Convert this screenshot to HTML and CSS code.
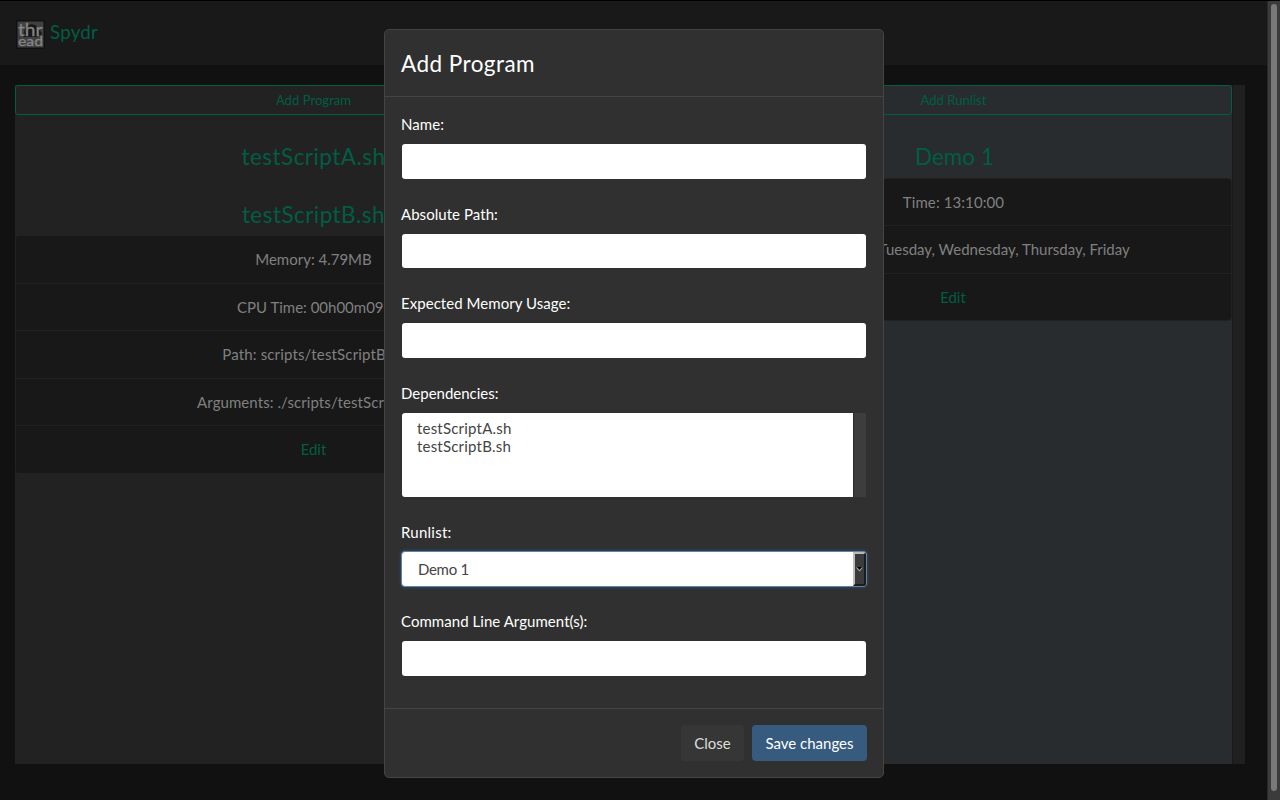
FILE: index.html
```html
<!DOCTYPE html>
<html lang="en">
<head>
<meta charset="utf-8">
<title>Spydr</title>
<link rel="stylesheet" href="styles.css">
</head>
<body>
<div class="page">
  <div class="main">
    <nav class="navbar">
      <svg class="logo" width="29" height="29" viewBox="0 0 29 29">
        <rect width="29" height="29" rx="1" fill="#111"/>
        <rect x="1.5" y="1.5" width="26" height="26" fill="#404040"/>
        <path d="M9 8Q15 1 22 7L26 14L21 17H7Z" fill="#171717"/>
        <text class="logo-text" x="2" y="15.5" font-size="17" textLength="24.5" lengthAdjust="spacingAndGlyphs">thr</text>
        <text class="logo-text" x="2" y="26.3" font-size="14" textLength="25" lengthAdjust="spacingAndGlyphs">ead</text>
      </svg>
      <span class="brand">Spydr</span>
    </nav>
    <div class="columns">
      <section class="programs">
        <button class="add">Add Program</button>
        <h4 class="title">testScriptA.sh</h4>
        <h4 class="title">testScriptB.sh</h4>
        <ul class="list">
          <li>Memory: 4.79MB</li>
          <li>CPU Time: 00h00m09s</li>
          <li class="wide">Path: scripts/testScriptB.sh</li>
          <li class="args">Arguments: ./scripts/testScriptB.sh</li>
          <li><a class="edit">Edit</a></li>
        </ul>
      </section>
      <section class="runlists">
        <button class="add">Add Runlist</button>
        <h4 class="title demo">Demo 1</h4>
        <ul class="list">
          <li class="time">Time: 13:10:00</li>
          <li>Days: Monday, Tuesday, Wednesday, Thursday, Friday</li>
          <li><a class="edit">Edit</a></li>
        </ul>
      </section>
      <div class="inner-scroll"></div>
    </div>
  </div>
  <div class="scrollbar"><div class="thumb"></div></div>
</div>
<div class="modal">
  <div class="modal-header">Add Program</div>
  <div class="modal-body">
    <div class="field"><label>Name:</label><div class="control"></div></div>
    <div class="field"><label>Absolute Path:</label><div class="control"></div></div>
    <div class="field"><label>Expected Memory Usage:</label><div class="control"></div></div>
    <div class="field"><label class="tight">Dependencies:</label>
      <div class="multi">
        <div class="options"><div>testScriptA.sh</div><div>testScriptB.sh</div></div>
        <div class="multi-track"></div>
      </div>
    </div>
    <div class="field"><label class="loose">Runlist:</label>
      <div class="select">
        <span class="value">Demo 1</span>
        <span class="arrow"><svg width="7" height="5" viewBox="0 0 7 5"><path d="M0 .5H7L3.5 4.5Z" fill="#aaa"/><path d="M1 0H6L3.5 3Z" fill="#000"/></svg></span>
      </div>
    </div>
    <div class="field"><label>Command Line Argument(s):</label><div class="control"></div></div>
  </div>
  <div class="modal-footer">
    <button class="btn close">Close</button>
    <button class="btn save">Save changes</button>
  </div>
</div>
</body>
</html>
```
FILE: styles.css
```css
* { box-sizing: border-box; }
body {
  margin: 0;
  height: 800px;
  overflow: hidden;
  background: #111;
  color: #808080;
  font: 15px/22.5px Lato, sans-serif;
}
button { font-family: inherit; }
.page { display: flex; height: 800px; border-top: 1px solid #000; }
.main { flex: 1; }
.navbar {
  display: flex;
  height: 64px;
  padding: 18px 16px 0;
  background: #191919;
}
.logo { margin: 1px 5px 0 0; overflow: visible; }
.logo-text { font-family: Lato, sans-serif; font-weight: 400; fill: #858585; stroke: #858585; stroke-width: .3px; }
.brand { margin-top: -1px; color: #005e44; font-size: 18.75px; line-height: 27px; letter-spacing: .2px; }
.columns { display: flex; height: 679px; margin: 20px 22px 0 15px; }
.programs { width: 597px; background: #222; }
.runlists {
  flex: 1;
  padding-left: 62px;
  background: #282c2f;
}
.inner-scroll { width: 13px; border-left: 1px solid #191919; background: #202020; }
.add {
  display: block;
  width: 100%;
  height: 30px;
  padding: 0;
  border: 1px solid #005e44;
  border-radius: 3px;
  background: transparent;
  color: #005e44;
  font-size: 13.125px;
  text-align: center;
}
.runlists .add { padding-left: 1px; }
.title {
  margin: 0;
  height: 58px;
  padding-top: 25px;
  color: #005e44;
  font-size: 22.5px;
  font-weight: 400;
  line-height: 34px;
  letter-spacing: .45px;
  text-align: center;
}
.title.demo { padding-left: 3px; letter-spacing: 0; }
.add + .title { height: 63px; padding-top: 25px; }
.add + .title + .title { height: 57px; padding-top: 20px; }
.list {
  margin: 0;
  padding: 0;
  border: 1px solid #222;
  border-radius: 4px;
  background: #181818;
  list-style: none;
  text-align: center;
}
.list li { height: 47.5px; padding-top: 12px; border-bottom: 1px solid #222; }
.list li:last-child { height: 46.5px; border-bottom: 0; }
.list .wide { letter-spacing: .15px; }
.list .args { letter-spacing: .08px; }
.list .time { padding-left: 1px; letter-spacing: .1px; }
.runlists .list li:first-child { height: 47px; }
.runlists .list li:nth-child(2) { padding-left: 2px; }
.edit { color: #005e44; }
.scrollbar {
  width: 13px;
  padding: 3px 3px 0;
  border-left: 1px solid #292929;
  background: #3b3b3b;
}
.thumb { width: 6px; height: 787px; border-radius: 3px; background: #797979; }
.modal {
  position: absolute;
  top: 29px;
  left: 384px;
  width: 500px;
  height: 749px;
  border: 1px solid #444;
  border-radius: 5px;
  background: #303030;
  color: #fff;
}
.modal-header {
  height: 67px;
  padding: 17px 16px 0;
  border-bottom: 1px solid #444;
  font-size: 22.5px;
  line-height: 34px;
  letter-spacing: .45px;
}
.modal-body { height: 611px; padding: 16px 16px; }
.field { margin-bottom: 22.75px; }
.field label { display: block; margin-bottom: 7.75px; letter-spacing: .05px; }
.field .tight { letter-spacing: 0; }
.field .loose { letter-spacing: .25px; }
.control {
  height: 36.5px;
  border: 1px solid transparent;
  border-radius: 4px;
  background: #fff;
  background-clip: padding-box;
}
.multi { display: flex; height: 86px; padding: 1px; color: #444; }
.options {
  flex: 1;
  padding: 6px 15px;
  border-radius: 3px 0 0 3px;
  background: #fff;
  line-height: 18px;
  letter-spacing: .2px;
}
.multi-track { width: 13px; border-left: 1px solid #2b2b2b; background: #3d3d3d; }
.select {
  display: flex;
  height: 36.5px;
  overflow: hidden;
  border: 1px solid #5b83a9;
  border-radius: 4px;
  background: #fff;
  box-shadow: 0 0 3px 1px rgba(55, 90, 127, .5);
  color: #444;
}
.value { flex: 1; padding: 6px 16px; letter-spacing: -.3px; }
.arrow {
  display: flex;
  align-items: center;
  justify-content: center;
  width: 13px;
  border: 2px solid;
  border-color: #bbb #1c1c1c #1c1c1c #bbb;
  background: #3b3b3b;
}
.modal-footer {
  display: flex;
  justify-content: flex-end;
  gap: 8px;
  padding: 16px;
  border-top: 1px solid #444;
}
.btn {
  height: 36px;
  padding: 0;
  border: 0;
  border-radius: 4px;
  color: #fff;
  font-size: 15px;
}
.close { width: 63px; background: #363636; color: #ddd; }
.save { width: 115px; background: #375a7f; }
```
